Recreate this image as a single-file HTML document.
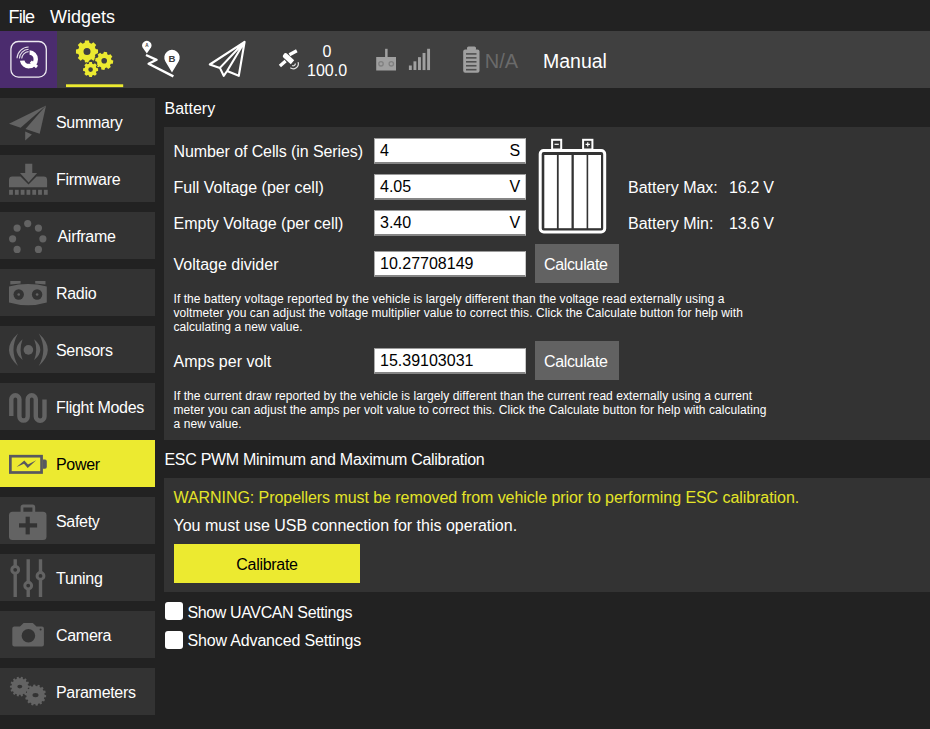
<!DOCTYPE html>
<html><head><meta charset="utf-8">
<style>
*{margin:0;padding:0;box-sizing:border-box}
html,body{width:930px;height:729px;overflow:hidden;background:#222222;font-family:"Liberation Sans",sans-serif;color:#fff}
.a{position:absolute;white-space:pre;line-height:1}
.t16{font-size:16px}
.t12{font-size:12px;line-height:14px}
svg{position:absolute;overflow:visible}
#menubar{position:absolute;left:0;top:0;width:930px;height:31px;background:#222222}
#toolbar{position:absolute;left:0;top:31px;width:930px;height:57px;background:#404040}
#logo{position:absolute;left:0;top:31px;width:57px;height:57px;background:#4b2c6e}
.sb{position:absolute;left:0;width:155px;height:47px;background:#333333}
.sb .lbl{position:absolute;left:56px;top:17.2px;letter-spacing:-0.3px;font-size:16px;line-height:1;white-space:pre;color:#fff}
.sb svg{left:0;top:0}
.panel{position:absolute;background:#333333}
.field{position:absolute;background:#fff;border-top:1px solid #9a9a9a;border-left:1px solid #aaaaaa;border-right:1px solid #c8c8c8;border-bottom:2px solid #858585}
.btn{position:absolute;background:#626262}
.cb{position:absolute;width:18px;height:18px;background:#fff;border-radius:3px}
.blk{color:#000}
</style></head>
<body>
<div id="menubar"></div>
<div class="a" style="left:8.5px;top:8.4px;font-size:18px;letter-spacing:-0.8px">File</div>
<div class="a" style="left:50px;top:8.4px;font-size:18px;letter-spacing:0px">Widgets</div>

<div id="toolbar"></div>
<div id="logo"></div>
<svg style="position:absolute;left:0;top:31px" width="57" height="57" viewBox="0 31 57 57"><rect x="10.9" y="41.5" width="35.4" height="35.6" rx="7.5" fill="none" stroke="#fff" stroke-opacity="0.9" stroke-width="1.3"/><path fill="#fff" fill-rule="evenodd" d="M29.6,50.2 A9.1,9.1 0 1,1 19.9,60.7 L24.5,60.4 A4.6,4.6 0 1,0 29.6,54.7Z"/><path stroke="#fff" stroke-width="3" fill="none" d="M30.8,61.6 L37,67"/><path fill="none" stroke="#fff" stroke-width="1.1" stroke-opacity="0.85" d="M17,58.3 A11.9,11.9 0 0,1 28.6,47 M19.4,58.5 A9.5,9.5 0 0,1 28.6,49.3 M21.7,58.6 A7.3,7.3 0 0,1 28.6,51.6"/></svg>
<svg style="position:absolute;left:60px;top:31px" width="70" height="57" viewBox="60 31 70 57"><path fill="#ecea30" fill-rule="evenodd" d="M95.67,49.09 L98.03,49.53 L98.03,53.47 L95.67,53.91 L94.84,55.93 L96.19,57.90 L93.40,60.69 L91.43,59.34 L89.41,60.17 L88.97,62.53 L85.03,62.53 L84.59,60.17 L82.57,59.34 L80.60,60.69 L77.81,57.90 L79.16,55.93 L78.33,53.91 L75.97,53.47 L75.97,49.53 L78.33,49.09 L79.16,47.07 L77.81,45.10 L80.60,42.31 L82.57,43.66 L84.59,42.83 L85.03,40.47 L88.97,40.47 L89.41,42.83 L91.43,43.66 L93.40,42.31 L96.19,45.10 L94.84,47.07ZM90.50,51.50 A3.5,3.5 0 1,0 83.50,51.50 A3.5,3.5 0 1,0 90.50,51.50Z"/><path fill="#ecea30" fill-rule="evenodd" d="M111.45,59.92 L113.30,60.56 L112.82,63.72 L110.86,63.78 L109.95,65.30 L110.80,67.06 L108.23,68.96 L106.80,67.62 L105.08,68.05 L104.44,69.90 L101.28,69.42 L101.22,67.46 L99.70,66.55 L97.94,67.40 L96.04,64.83 L97.38,63.40 L96.95,61.68 L95.10,61.04 L95.58,57.88 L97.54,57.82 L98.45,56.30 L97.60,54.54 L100.17,52.64 L101.60,53.98 L103.32,53.55 L103.96,51.70 L107.12,52.18 L107.18,54.14 L108.70,55.05 L110.46,54.20 L112.36,56.77 L111.02,58.20ZM107.00,60.80 A2.8,2.8 0 1,0 101.40,60.80 A2.8,2.8 0 1,0 107.00,60.80Z" stroke="#404040" stroke-width="1.6" paint-order="stroke"/><path fill="#ecea30" fill-rule="evenodd" d="M96.48,67.97 L98.08,68.26 L98.08,70.94 L96.48,71.23 L95.91,72.60 L96.84,73.95 L94.95,75.84 L93.60,74.91 L92.23,75.48 L91.94,77.08 L89.26,77.08 L88.97,75.48 L87.60,74.91 L86.25,75.84 L84.36,73.95 L85.29,72.60 L84.72,71.23 L83.12,70.94 L83.12,68.26 L84.72,67.97 L85.29,66.60 L84.36,65.25 L86.25,63.36 L87.60,64.29 L88.97,63.72 L89.26,62.12 L91.94,62.12 L92.23,63.72 L93.60,64.29 L94.95,63.36 L96.84,65.25 L95.91,66.60ZM92.90,69.60 A2.3,2.3 0 1,0 88.30,69.60 A2.3,2.3 0 1,0 92.90,69.60Z" stroke="#404040" stroke-width="1.6" paint-order="stroke"/><rect x="66" y="84.3" width="57.2" height="2.8" fill="#ecea30"/></svg>
<svg style="position:absolute;left:130px;top:31px" width="60" height="57" viewBox="130 31 60 57"><path fill="none" stroke="#fff" stroke-width="2.4" stroke-linejoin="round" stroke-linecap="butt" d="M146,55 L156.6,59.8 L148.6,63.8 L173.4,76.4"/><path fill="#fff" d="M146.8,53.4 L142.6,47.6 A4.7,4.7 0 1,1 151,47.6Z"/><path fill="#fff" d="M172,72.6 L165.4,61.5 A7.7,7.7 0 1,1 178.6,61.5Z"/><text x="146.8" y="47.2" font-size="4.6" font-weight="bold" text-anchor="middle" fill="#404040" font-family="Liberation Sans">A</text><text x="172" y="61.5" font-size="9.6" font-weight="bold" text-anchor="middle" fill="#404040" font-family="Liberation Sans">B</text></svg>
<svg style="position:absolute;left:200px;top:31px" width="60" height="57" viewBox="200 31 60 57"><path fill="none" stroke="#fff" stroke-width="2.1" stroke-linejoin="round" d="M244.6,41.8 L209.8,64.5 L219.9,67.9 L223.7,75.8 L227.1,71 L238.8,75.8Z M244.6,41.8 L219.9,67.9 M244.6,41.8 L227.1,71"/></svg>
<svg style="position:absolute;left:270px;top:31px" width="40" height="57" viewBox="270 31 40 57"><path stroke="#fff" stroke-width="3.3" fill="none" d="M279.9,65.9 L285.6,61 M289.4,54.8 L296.8,50.8"/><path fill="#fff" d="M283.6,54.4 A2.5,2.5 0 0,1 287.4,53.9 L294.2,60.3 L290.8,64.3 L283.9,58 A2.5,2.5 0 0,1 283.6,54.4Z"/><g transform="translate(293.2,63.6)"><path stroke="#fff" stroke-width="1.2" fill="none" opacity="0.85" d="M2.2,0 A2.2,2.2 0 0,1 -1.1,1.9 M4.9,-1.5 A5.1,5.1 0 0,1 -2.9,4.2"/></g></svg>
<svg style="position:absolute;left:370px;top:31px" width="70" height="57" viewBox="370 31 70 57"><rect x="376.2" y="57" width="19.8" height="13.5" fill="#a0a0a0"/><rect x="385.1" y="48.8" width="2.5" height="9" fill="#a0a0a0"/><g fill="none" stroke="#808080" stroke-width="1.3"><circle cx="381" cy="63.8" r="2.2"/><circle cx="391.3" cy="63.8" r="2.2"/></g><rect x="408.90" y="65.50" width="2.9" height="4.50" fill="#a0a0a0"/><rect x="413.46" y="61.32" width="2.9" height="8.70" fill="#a0a0a0"/><rect x="418.02" y="57.14" width="2.9" height="12.90" fill="#a0a0a0"/><rect x="422.58" y="52.96" width="2.9" height="17.10" fill="#a0a0a0"/><rect x="427.14" y="48.78" width="2.9" height="21.30" fill="#a0a0a0"/></svg>
<svg style="position:absolute;left:455px;top:31px" width="30" height="57" viewBox="455 31 30 57"><rect x="463.2" y="49.6" width="16.3" height="23.2" rx="2" fill="#a0a0a0"/><rect x="467" y="46.6" width="9" height="4" rx="1.5" fill="#a0a0a0"/><rect x="466" y="53.10" width="10.5" height="1.6" fill="#505050"/><rect x="466" y="57.05" width="10.5" height="1.6" fill="#505050"/><rect x="466" y="61.00" width="10.5" height="1.6" fill="#505050"/><rect x="466" y="64.95" width="10.5" height="1.6" fill="#505050"/><rect x="466" y="68.90" width="10.5" height="1.6" fill="#505050"/></svg>
<div class="a t16" style="left:322.5px;top:44.2px">0</div>
<div class="a t16" style="left:307px;top:63.2px">100.0</div>
<div class="a" style="left:484.8px;top:50.8px;font-size:20px;color:#6a6a6a">N/A</div>
<div class="a" style="left:543px;top:51.5px;font-size:19.5px">Manual</div>

<div class="sb" style="top:98px;background:#333333"><svg width="55" height="47" viewBox="0 0 55 47"><g fill="#636363"><path d="M46.1,7.4 L9,25.8 L20.6,29.7Z"/><path d="M46.1,7.4 L25.5,31 L39.7,35.8Z"/><path d="M25.2,33.5 L31.9,36.5 L25.2,42.6Z"/></g></svg><div class="lbl" style="color:#fff">Summary</div></div>
<div class="sb" style="top:155px;background:#333333"><svg width="55" height="47" viewBox="0 0 55 47"><g fill="#636363"><path d="M9,31.5 L9,25 Q9,21.6 12.4,21.6 L20.5,21.6 L28.5,29.6 L36.5,21.6 L43.7,21.6 Q47.1,21.6 47.1,25 L47.1,32.3 L9,32.3Z"/><path d="M25.2,8.7 L32.3,8.7 L32.3,18 L37.1,18 L28.6,27.6 L20,18 L25.2,18Z"/><rect x="9.10" y="34.8" width="3.8" height="5"/><rect x="14.90" y="34.8" width="3.8" height="5"/><rect x="20.70" y="34.8" width="3.8" height="5"/><rect x="26.50" y="34.8" width="3.8" height="5"/><rect x="32.30" y="34.8" width="3.8" height="5"/><rect x="38.10" y="34.8" width="3.8" height="5"/><rect x="43.90" y="34.8" width="3.8" height="5"/></g></svg><div class="lbl" style="color:#fff">Firmware</div></div>
<div class="sb" style="top:212px;background:#333333"><svg width="55" height="47" viewBox="0 0 55 47"><g fill="#636363"><circle cx="27.7" cy="11.6" r="3.6"/><circle cx="17.1" cy="16.1" r="3.6"/><circle cx="38.4" cy="16.1" r="3.6"/><circle cx="12.6" cy="26.8" r="3.6"/><circle cx="42.9" cy="26.8" r="3.6"/><circle cx="17.1" cy="37.4" r="3.6"/><circle cx="38.4" cy="37.4" r="3.6"/></g></svg><div class="lbl" style="color:#fff;left:57.5px">Airframe</div></div>
<div class="sb" style="top:269px;background:#333333"><svg width="55" height="47" viewBox="0 0 55 47"><g fill="#636363"><path d="M9,17.4 Q28,12.5 46.8,17.4 L46.8,33.5 Q28,39 9,33.5Z"/><path d="M10.3,12 L20.6,12 L20.6,14.6 L10.3,15.4Z"/><path d="M35.2,12 L45.5,12 L45.5,15.4 L35.2,14.6Z"/></g><g fill="#333333"><circle cx="18.7" cy="25.5" r="5.2"/><circle cx="37.1" cy="25.5" r="5.2"/></g><g fill="#636363"><circle cx="18.7" cy="25.5" r="1.3"/><circle cx="37.1" cy="25.5" r="1.3"/></g></svg><div class="lbl" style="color:#fff">Radio</div></div>
<div class="sb" style="top:326px;background:#333333"><svg width="55" height="47" viewBox="0 0 55 47"><g fill="#636363"><circle cx="28.4" cy="23.9" r="4.8"/><path d="M22.6,13.3 Q10.4,23.9 22.6,34.1 Q18.6,23.9 22.6,13.3Z"/><path d="M34.2,13.3 Q46.4,23.9 34.2,34.1 Q38.2,23.9 34.2,13.3Z"/><path d="M18,7.6 Q0,23.9 18,39.9 Q9,23.9 18,7.6Z"/><path d="M38.8,7.6 Q56.8,23.9 38.8,39.9 Q47.8,23.9 38.8,7.6Z"/></g></svg><div class="lbl" style="color:#fff">Sensors</div></div>
<div class="sb" style="top:383px;background:#333333"><svg width="55" height="47" viewBox="0 0 55 47"><path fill="none" stroke="#636363" stroke-width="4.4" d="M11.3,33 L11.3,16.3 A4.05,4.05 0 0,1 19.4,16.3 L19.4,33.4 A4.15,4.15 0 0,0 27.7,33.4 L27.7,16.3 A4.05,4.05 0 0,1 35.8,16.3 L35.8,33.4 A4.35,4.35 0 0,0 44.5,33.4 L44.5,16.5"/></svg><div class="lbl" style="color:#fff">Flight Modes</div></div>
<div class="sb" style="top:440px;background:#ecea30"><svg width="55" height="47" viewBox="0 0 55 47"><rect x="10.35" y="16.2" width="31.2" height="16.3" fill="none" stroke="#58585f" stroke-width="2.7"/><path fill="#58585f" d="M42.9,19.4 L45,19.4 Q46.8,19.6 46.8,21.4 L46.8,26.8 Q46.8,28.6 45,28.7 L42.9,28.7Z"/><path fill="#58585f" d="M16.6,27 L24.3,20.4 L28,24.6 L36.2,20.2 L27.7,28.1 L24,23.7Z"/></svg><div class="lbl" style="color:#000">Power</div></div>
<div class="sb" style="top:497px;background:#333333"><svg width="55" height="47" viewBox="0 0 55 47"><g fill="#636363"><rect x="9" y="14.8" width="37.5" height="28.1" rx="3.5"/></g><path fill="none" stroke="#636363" stroke-width="2.8" d="M22,15.5 L22,10.2 Q22,9 23.2,9 L32.5,9 Q33.8,9 33.8,10.2 L33.8,15.5"/><g fill="#333333"><rect x="19" y="26.3" width="18.1" height="4.2"/><rect x="25.6" y="19.7" width="4.2" height="17.7"/></g></svg><div class="lbl" style="color:#fff">Safety</div></div>
<div class="sb" style="top:554px;background:#333333"><svg width="55" height="47" viewBox="0 0 55 47"><g stroke="#636363" stroke-width="3.4" fill="none"><path d="M15.2,5.2 L15.2,42.9 M28.2,5.2 L28.2,42.9 M40.5,5.2 L40.5,42.9"/></g><g fill="#333333" stroke="#636363" stroke-width="3"><circle cx="15.2" cy="15.8" r="3.4"/><circle cx="28.2" cy="31.6" r="3.4"/><circle cx="40.5" cy="21.9" r="3.4"/></g></svg><div class="lbl" style="color:#fff">Tuning</div></div>
<div class="sb" style="top:611px;background:#333333"><svg width="55" height="47" viewBox="0 0 55 47"><path fill="#636363" fill-rule="evenodd" d="M14.3,15.5 L20,15.5 L23.6,11.9 L32.8,11.9 L36.5,15.5 L41.9,15.5 Q43.9,15.5 43.9,17.5 L43.9,33.5 Q43.9,35.5 41.9,35.5 L14.3,35.5 Q12.3,35.5 12.3,33.5 L12.3,17.5 Q12.3,15.5 14.3,15.5Z M35.2,24.8 A6.8,6.8 0 1,0 21.6,24.8 A6.8,6.8 0 1,0 35.2,24.8Z M41.6,18.4 A1,1 0 1,0 39.6,18.4 A1,1 0 1,0 41.6,18.4Z"/></svg><div class="lbl" style="color:#fff">Camera</div></div>
<div class="sb" style="top:668px;background:#333333"><svg width="55" height="47" viewBox="0 0 55 47"><path fill="#636363" fill-rule="evenodd" d="M28.02,17.43 L29.66,17.68 L29.66,19.52 L28.02,19.77 L27.71,21.11 L29.08,22.05 L28.28,23.70 L26.69,23.22 L25.84,24.29 L26.66,25.74 L25.23,26.88 L24.00,25.76 L22.77,26.35 L22.89,28.01 L21.10,28.41 L20.48,26.87 L19.12,26.87 L18.50,28.41 L16.71,28.01 L16.83,26.35 L15.60,25.76 L14.37,26.88 L12.94,25.74 L13.76,24.29 L12.91,23.22 L11.32,23.70 L10.52,22.05 L11.89,21.11 L11.58,19.77 L9.94,19.52 L9.94,17.68 L11.58,17.43 L11.89,16.09 L10.52,15.15 L11.32,13.50 L12.91,13.98 L13.76,12.91 L12.94,11.46 L14.37,10.32 L15.60,11.44 L16.83,10.85 L16.71,9.19 L18.50,8.79 L19.12,10.33 L20.48,10.33 L21.10,8.79 L22.89,9.19 L22.77,10.85 L24.00,11.44 L25.23,10.32 L26.66,11.46 L25.84,12.91 L26.69,13.98 L28.28,13.50 L29.08,15.15 L27.71,16.09ZM22.30,18.60 A2.5,1.8 0 1,0 17.30,18.60 A2.5,1.8 0 1,0 22.30,18.60Z"/><path fill="#636363" fill-rule="evenodd" d="M44.59,26.72 L46.20,27.18 L46.00,29.15 L44.33,29.28 L43.86,30.70 L45.11,31.81 L44.07,33.50 L42.51,32.90 L41.47,33.97 L42.11,35.51 L40.45,36.59 L39.30,35.37 L37.90,35.88 L37.80,37.55 L35.84,37.79 L35.34,36.20 L33.85,36.05 L33.04,37.51 L31.17,36.88 L31.41,35.23 L30.13,34.45 L28.77,35.42 L27.35,34.03 L28.29,32.65 L27.47,31.39 L25.83,31.67 L25.15,29.81 L26.59,28.97 L26.41,27.48 L24.80,27.02 L25.00,25.05 L26.67,24.92 L27.14,23.50 L25.89,22.39 L26.93,20.70 L28.49,21.30 L29.53,20.23 L28.89,18.69 L30.55,17.61 L31.70,18.83 L33.10,18.32 L33.20,16.65 L35.16,16.41 L35.66,18.00 L37.15,18.15 L37.96,16.69 L39.83,17.32 L39.59,18.97 L40.87,19.75 L42.23,18.78 L43.65,20.17 L42.71,21.55 L43.53,22.81 L45.17,22.53 L45.85,24.39 L44.41,25.23ZM38.50,27.10 A3,2.2 0 1,0 32.50,27.10 A3,2.2 0 1,0 38.50,27.10Z"/></svg><div class="lbl" style="color:#fff">Parameters</div></div>

<div class="a t16" style="left:164.5px;top:100.5px">Battery</div>
<div class="panel" style="left:164px;top:127px;width:766px;height:313px"></div>
<div class="a t16" style="left:173.5px;top:143.5px;letter-spacing:-0.1px">Number of Cells (in Series)</div>
<div class="a t16" style="left:173.5px;top:179.5px">Full Voltage (per cell)</div>
<div class="a t16" style="left:173.5px;top:215.5px">Empty Voltage (per cell)</div>
<div class="a t16" style="left:173.5px;top:256.5px">Voltage divider</div>

<div class="field" style="left:374px;top:138px;width:152px;height:26px"></div>
<div class="a t16 blk" style="left:380px;top:142.5px">4</div>
<div class="a t16 blk" style="left:509.5px;top:142.5px">S</div>
<div class="field" style="left:374px;top:174px;width:152px;height:26px"></div>
<div class="a t16 blk" style="left:380px;top:178.5px">4.05</div>
<div class="a t16 blk" style="left:509.5px;top:178.5px">V</div>
<div class="field" style="left:374px;top:210px;width:152px;height:26px"></div>
<div class="a t16 blk" style="left:380px;top:214.5px">3.40</div>
<div class="a t16 blk" style="left:509.5px;top:214.5px">V</div>

<svg style="left:530px;top:130px" width="85" height="110" viewBox="530 130 85 110">
<rect x="540.2" y="150.5" width="64.5" height="81.5" rx="3.5" fill="none" stroke="#fff" stroke-width="3"/>
<rect x="544.3" y="155" width="12.6" height="73.2" fill="#fff"/>
<rect x="558.7" y="155" width="12.8" height="73.2" fill="#fff"/>
<rect x="573.8" y="155" width="12.8" height="73.2" fill="#fff"/>
<rect x="588.2" y="155" width="12.8" height="73.2" fill="#fff"/>
<rect x="552.1" y="139.8" width="9.1" height="9.7" fill="none" stroke="#fff" stroke-width="2"/>
<rect x="583.1" y="139.8" width="9.3" height="9.7" fill="none" stroke="#fff" stroke-width="2"/>
<path d="M554.5,144.3 H558.8" stroke="#fff" stroke-width="1.2"/>
<path d="M585.6,144.3 H589.9 M587.75,142.2 V146.4" stroke="#fff" stroke-width="1.2"/>
</svg>

<div class="a t16" style="left:628px;top:180.4px">Battery Max:</div>
<div class="a t16" style="left:729px;top:180.4px;letter-spacing:-0.25px">16.2 V</div>
<div class="a t16" style="left:628px;top:216.4px">Battery Min:</div>
<div class="a t16" style="left:729px;top:216.4px;letter-spacing:-0.25px">13.6 V</div>

<div class="field" style="left:374px;top:251px;width:152px;height:26px"></div>
<div class="a t16 blk" style="left:380px;top:255.5px">10.27708149</div>
<div class="btn" style="left:535px;top:244px;width:84px;height:39px"></div>
<div class="a t16" style="left:544px;top:256.5px;letter-spacing:-0.35px">Calculate</div>

<div class="a t12" style="left:173.5px;top:292px;letter-spacing:0.07px">If the battery voltage reported by the vehicle is largely different than the voltage read externally using a
voltmeter you can adjust the voltage multiplier value to correct this. Click the Calculate button for help with
calculating a new value.</div>

<div class="a t16" style="left:173.5px;top:353.5px">Amps per volt</div>
<div class="field" style="left:374px;top:348px;width:152px;height:26px"></div>
<div class="a t16 blk" style="left:380px;top:352.5px">15.39103031</div>
<div class="btn" style="left:535px;top:341px;width:84px;height:39px"></div>
<div class="a t16" style="left:544px;top:353.5px;letter-spacing:-0.35px">Calculate</div>

<div class="a t12" style="left:173.5px;top:388.5px;letter-spacing:0.07px">If the current draw reported by the vehicle is largely different than the current read externally using a current
meter you can adjust the amps per volt value to correct this. Click the Calculate button for help with calculating
a new value.</div>

<div class="a t16" style="left:164.5px;top:452px;letter-spacing:-0.3px">ESC PWM Minimum and Maximum Calibration</div>
<div class="panel" style="left:164px;top:478px;width:766px;height:114px"></div>
<div class="a t16" style="left:173.5px;top:490.3px;color:#e4e428;letter-spacing:-0.06px">WARNING: Propellers must be removed from vehicle prior to performing ESC calibration.</div>
<div class="a t16" style="left:173.5px;top:518.1px">You must use USB connection for this operation.</div>
<div class="btn" style="left:174px;top:544px;width:186px;height:39px;background:#ecea30"></div>
<div class="a t16 blk" style="left:236.3px;top:556.5px;letter-spacing:-0.3px">Calibrate</div>

<div class="cb" style="left:165px;top:602px"></div>
<div class="a t16" style="left:187.5px;top:604.5px;letter-spacing:-0.38px">Show UAVCAN Settings</div>
<div class="cb" style="left:165px;top:631px"></div>
<div class="a t16" style="left:187.5px;top:633.2px;letter-spacing:-0.16px">Show Advanced Settings</div>
</body></html>
